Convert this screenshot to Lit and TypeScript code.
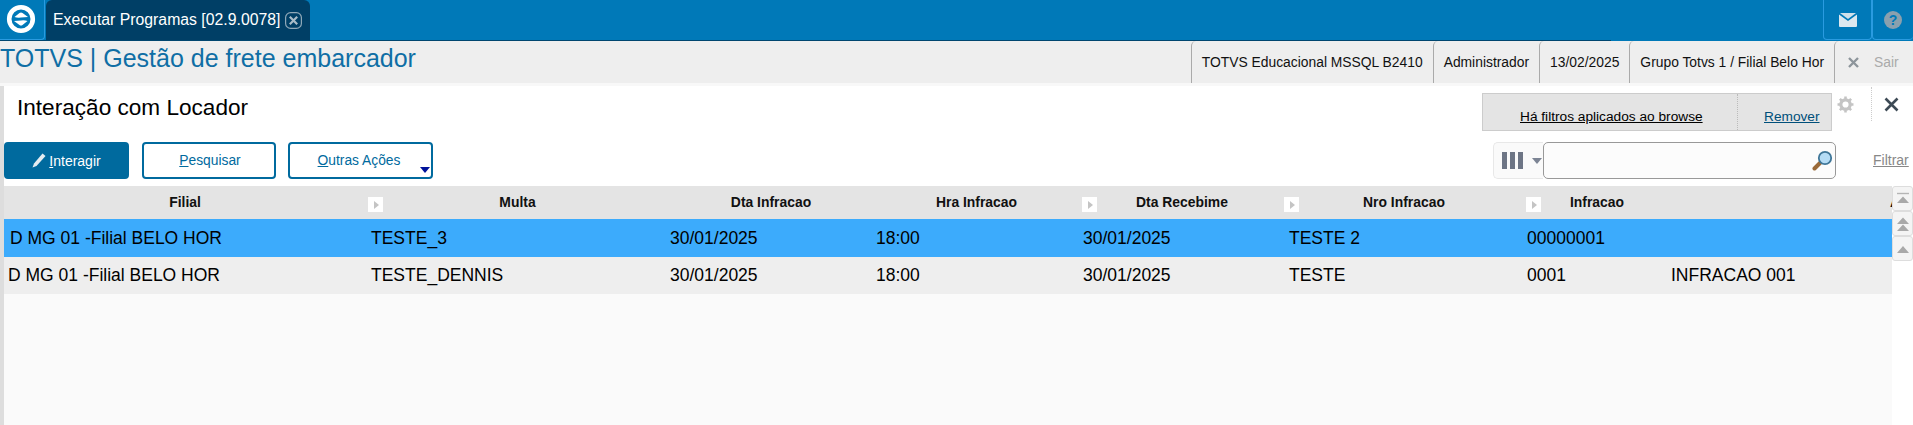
import { LitElement, html, css, svg } from "lit";
import { customElement } from "lit/decorators.js";

const headers = ["Filial", "Multa", "Dta Infracao", "Hra Infracao", "Dta Recebime", "Nro Infracao", "Infracao", "A"];
const handles = [false, true, false, false, true, true, true, false];
const rows = [
  ["D MG 01 -Filial BELO HOR", "TESTE_3", "30/01/2025", "18:00", "30/01/2025", "TESTE 2", "00000001", ""],
  ["D MG 01 -Filial BELO HOR", "TESTE_DENNIS", "30/01/2025", "18:00", "30/01/2025", "TESTE", "0001", "INFRACAO 001"],
];

const tri = svg`<path d="M2 12 L8 5 L14 12 Z" fill="#a9a9a9"/>`;

@customElement("app-root")
export class AppRoot extends LitElement {
  static styles = css`
    :host { display: block; height: 425px; overflow: hidden; background: #fafafa; font-family: "Liberation Sans", Arial, sans-serif; color: #000; }
    .top { height: 41px; background: #0079b8; display: flex; box-sizing: border-box; position: relative; }
    .top::after { content: ""; position: absolute; left: 0; top: 40px; width: 1611px; height: 1px; background: #00466f; }
    .logo { width: 45px; height: 40px; box-sizing: border-box; border: 1px solid #2a9be0; border-width: 0 1px 1px 0; border-radius: 0 0 4px 0; display: flex; align-items: center; justify-content: center; padding-right: 2px; }
    .tab { margin-left: 1px; width: 264px; height: 40px; background: #003f66; border-radius: 6px 6px 0 0; display: flex; align-items: center; padding-left: 7px; box-sizing: border-box; color: #fff; font-size: 15.8px; gap: 5px; }
    .spacer { flex: 1; }
    .tc { width: 49px; height: 40px; box-sizing: border-box; border: 1px solid #2a9be0; border-width: 0 1px 1px 1px; border-radius: 0 0 4px 4px; display: flex; align-items: center; justify-content: center; }
    .tc.last { width: 41px; border-right: none; }
    .sub { height: 42px; background: #eee; display: flex; align-items: center; }
    .brand { flex: 1; font-size: 25px; color: #0f6ea5; padding-bottom: 8px; }
    .info { height: 42px; box-sizing: border-box; border-left: 1px solid #aaa; border-radius: 5px 0 0 0; padding: 0 10px; display: flex; align-items: center; font-size: 13.85px; color: #111; white-space: nowrap; }
    .info.sair { width: 79px; color: #aaa; gap: 15px; padding: 0 0 0 13px; }
    .gap { height: 3px; background: #f8f8f8; }
    .main { display: flex; height: 339px; }
    .strip { width: 4px; background: #ddd; flex: none; }
    .content { flex: 1; min-width: 0; background: #fff; display: flex; flex-direction: column; }
    .head { height: 56px; display: flex; flex: none; box-sizing: border-box; }
    .head h1 { flex: 1; margin: 0; font-weight: 400; font-size: 22.6px; line-height: 26px; padding: 9px 0 0 13px; }
    .filters { width: 350px; height: 38px; margin-top: 7px; box-sizing: border-box; background: #e4e4e4; border: 1px solid #ccc; display: flex; font-size: 13.7px; }
    .f1 { width: 255px; height: 36px; box-sizing: border-box; padding: 14px 0 0 37px; border-right: 1px dotted #bbb; color: #000; text-decoration: underline; line-height: 18px; }
    .f2 { padding: 14px 0 0 26px; height: 36px; box-sizing: border-box; color: #004f7a; text-decoration: underline; line-height: 18px; }
    .gear { width: 39px; height: 34px; margin-top: 1px; padding-right: 12px; display: flex; align-items: center; justify-content: center; box-sizing: border-box; }
    .close { width: 39px; height: 34px; margin-top: 1px; border-left: 1px dotted #ccc; display: flex; align-items: center; justify-content: center; box-sizing: border-box; margin-right: 3px; }
    .tools { height: 44px; flex: none; display: flex; box-sizing: border-box; }
    .btn { height: 37px; box-sizing: border-box; border: 2px solid #006a9e; border-radius: 4px; background: #fff; color: #006a9e; font-size: 14px; display: flex; align-items: center; justify-content: center; position: relative; }
    .btn u { text-decoration: underline; }
    .b1 { width: 125px; background: #006a9e; color: #fff; gap: 3px; }
    .b2 { width: 134px; margin-left: 13px; font-size: 13.8px; padding-left: 2px; }
    .b3 { width: 145px; margin-left: 12px; padding-right: 3px; font-size: 13.8px; }
    .b3::after { content: ""; position: absolute; right: 1px; bottom: 4px; border: 5px solid transparent; border-top: 6px solid #00129a; border-bottom: 0; }
    .tools .sp { flex: 1; }
    .seg { width: 50px; height: 37px; box-sizing: border-box; border: 1px solid #e8e8e8; border-right: none; border-radius: 5px 0 0 5px; background: #fafafa; display: flex; align-items: center; padding-left: 8px; gap: 9px; }
    .bars { display: flex; gap: 3px; }
    .bars i { display: block; width: 5px; height: 17px; background: #6d7585; }
    .caret { border: 5px solid transparent; border-top: 6px solid #7c8494; border-bottom: 0; }
    .input { width: 293px; height: 37px; box-sizing: border-box; border: 1px solid #999; border-radius: 5px; background: #fcfcfc; display: flex; align-items: center; justify-content: flex-end; padding-right: 2px; }
    .filtrar { width: 77px; box-sizing: border-box; padding-left: 37px; font-size: 14px; color: #888; text-decoration: underline; line-height: 36px; }
    .gridwrap { flex: 1; display: flex; min-height: 0; }
    .grid { flex: 1; min-width: 0; display: grid; grid-template-columns: 364px 301px 206px 207px 202px 242px 144px 1fr; grid-auto-rows: min-content; align-content: start; overflow: hidden; background: #fafafa; }
    .th { height: 33px; box-sizing: border-box; background: #e4e4e4; position: relative; display: flex; align-items: center; justify-content: center; font-weight: 700; font-size: 13.9px; color: #111; padding: 0 2px 2px 0; overflow: hidden; }
    .th.c3 { padding-right: 4px; }
    .th.c7 { justify-content: flex-end; padding-right: 0; }
    .th.c7 span { margin-right: -8px; }
    .hd { position: absolute; left: 0; top: 11px; width: 15px; height: 15px; background: #fff; display: flex; align-items: center; justify-content: center; }
    .hd::after { content: ""; border: 4px solid transparent; border-left: 5px solid #c4c4c4; border-right: 0; margin-left: 1px; }
    .td { height: 37px; display: flex; align-items: center; font-size: 17.5px; padding-left: 3px; white-space: nowrap; box-sizing: border-box; }
    .td.r0 { background: #3cabfc; height: 38px; }
    .td.r1 { background: #eee; }
    .td.c0 { padding-left: 4px; }
    .td.r0.c0 { padding-left: 6px; }
    .td.c5 { padding-left: 5px; }
    .td.c2, .td.c3, .td.c6, .td.c7, .td.c4 { padding-left: 1px; }
    .scroll { width: 21px; flex: none; display: flex; flex-direction: column; }
    .sb { height: 25px; box-sizing: border-box; background: #f4f4f4; border: 1px solid #ddd; border-radius: 3px; display: flex; align-items: center; justify-content: center; }
  `;

  render() {
    return html`
      <div class="top">
        <div class="logo">
          <svg width="32" height="32" viewBox="0 0 32 32">
            <circle cx="16" cy="15" r="11.8" fill="none" stroke="#fff" stroke-width="4.6"/>
            <path d="M9.5 13 L14.5 9 Q16 8 17.5 9 L23 13 L16 13.5 Q12.5 14 9.5 13 Z M22.5 17 L17.5 21 Q16 22 14.5 21 L9 17 L16 16.5 Q19.5 16 22.5 17 Z" fill="#fff"/>
          </svg>
        </div>
        <div class="tab">
          <span>Executar Programas [02.9.0078]</span>
          <svg width="17" height="17" viewBox="0 0 17 17">
            <rect x="0.6" y="0.6" width="15.8" height="15.8" rx="5" fill="none" stroke="#8fa8b8" stroke-width="1.2"/>
            <path d="M4.8 4.8 L12.2 12.2 M12.2 4.8 L4.8 12.2" stroke="#a9bcc8" stroke-width="2.2"/>
          </svg>
        </div>
        <div class="spacer"></div>
        <div class="tc">
          <svg width="18" height="14" viewBox="0 0 18 14">
            <path d="M1 0 H17 L9 6 Z" fill="#cfe0ea"/>
            <path d="M0 1.5 L9 8 L18 1.5 V13 Q18 14 17 14 H1 Q0 14 0 13 Z" fill="#dce8ef"/>
          </svg>
        </div>
        <div class="tc last">
          <svg width="18" height="18" viewBox="0 0 18 18">
            <circle cx="9" cy="9" r="9" fill="#8aa0ae"/>
            <text x="9" y="14" text-anchor="middle" font-family="Liberation Sans" font-weight="700" font-size="14" fill="#0079b8">?</text>
          </svg>
        </div>
      </div>
      <div class="sub">
        <div class="brand">TOTVS | Gestão de frete embarcador</div>
        <div class="info">TOTVS Educacional MSSQL B2410</div>
        <div class="info">Administrador</div>
        <div class="info">13/02/2025</div>
        <div class="info">Grupo Totvs 1 / Filial Belo Hor</div>
        <div class="info sair">
          <svg width="11" height="11" viewBox="0 0 11 11"><path d="M1 1 L10 10 M10 1 L1 10" stroke="#8d959b" stroke-width="2.4"/></svg>
          <span>Sair</span>
        </div>
      </div>
      <div class="gap"></div>
      <div class="main">
        <div class="strip"></div>
        <div class="content">
          <div class="head">
            <h1>Interação com Locador</h1>
            <div class="filters">
              <div class="f1">Há filtros aplicados ao browse</div>
              <div class="f2">Remover</div>
            </div>
            <div class="gear">
              <svg width="17" height="17" viewBox="0 0 16 16">
                <circle cx="8" cy="8" r="4.4" fill="none" stroke="#c4c4c4" stroke-width="3"/>
                <path d="M8 0.5 V3 M8 13 V15.5 M0.5 8 H3 M13 8 H15.5 M2.7 2.7 L4.4 4.4 M11.6 11.6 L13.3 13.3 M13.3 2.7 L11.6 4.4 M4.4 11.6 L2.7 13.3" stroke="#c4c4c4" stroke-width="2.4"/>
              </svg>
            </div>
            <div class="close">
              <svg width="15" height="15" viewBox="0 0 15 15"><path d="M1.5 1.5 L13.5 13.5 M13.5 1.5 L1.5 13.5" stroke="#3d4a55" stroke-width="2.6"/></svg>
            </div>
          </div>
          <div class="tools">
            <div class="btn b1">
              <svg width="14" height="15" viewBox="0 0 14 15"><path d="M10.5 0.5 L13.5 3 L4.5 13 L0.5 14.5 L2 10.5 Z" fill="#e4ecf1"/></svg>
              <span><u>I</u>nteragir</span>
            </div>
            <div class="btn b2"><span><u>P</u>esquisar</span></div>
            <div class="btn b3"><span><u>O</u>utras Ações</span></div>
            <div class="sp"></div>
            <div class="seg"><div class="bars"><i></i><i></i><i></i></div><div class="caret"></div></div>
            <div class="input">
              <svg width="21" height="21" viewBox="0 0 21 21">
                <path d="M8.5 12.5 L2.5 18.5" stroke="#9a6a3a" stroke-width="4" stroke-linecap="round"/>
                <circle cx="13" cy="8" r="6.2" fill="#b5dcf5" stroke="#3f7698" stroke-width="1.8"/>
              </svg>
            </div>
            <div class="filtrar">Filtrar</div>
          </div>
          <div class="gridwrap">
            <div class="grid">
              ${headers.map((h, i) => html`<div class="th c${i}">${handles[i] ? html`<i class="hd"></i>` : ""}<span>${h}</span></div>`)}
              ${rows.map((r, ri) => r.map((c, ci) => html`<div class="td r${ri} c${ci}">${c}</div>`))}
            </div>
            <div class="scroll">
              <div class="sb"><svg width="16" height="16" viewBox="0 0 16 16"><path d="M2 2.5 H14" stroke="#b5b5b5" stroke-width="1.4"/><path d="M2 12 L8 5.5 L14 12 Z" fill="#a9a9a9"/></svg></div>
              <div class="sb"><svg width="16" height="16" viewBox="0 0 16 16"><path d="M2 8 L8 1.5 L14 8 Z M2 15 L8 8.5 L14 15 Z" fill="#a9a9a9"/></svg></div>
              <div class="sb"><svg width="16" height="16" viewBox="0 0 16 16">${tri}</svg></div>
            </div>
          </div>
        </div>
      </div>
    `;
  }
}
